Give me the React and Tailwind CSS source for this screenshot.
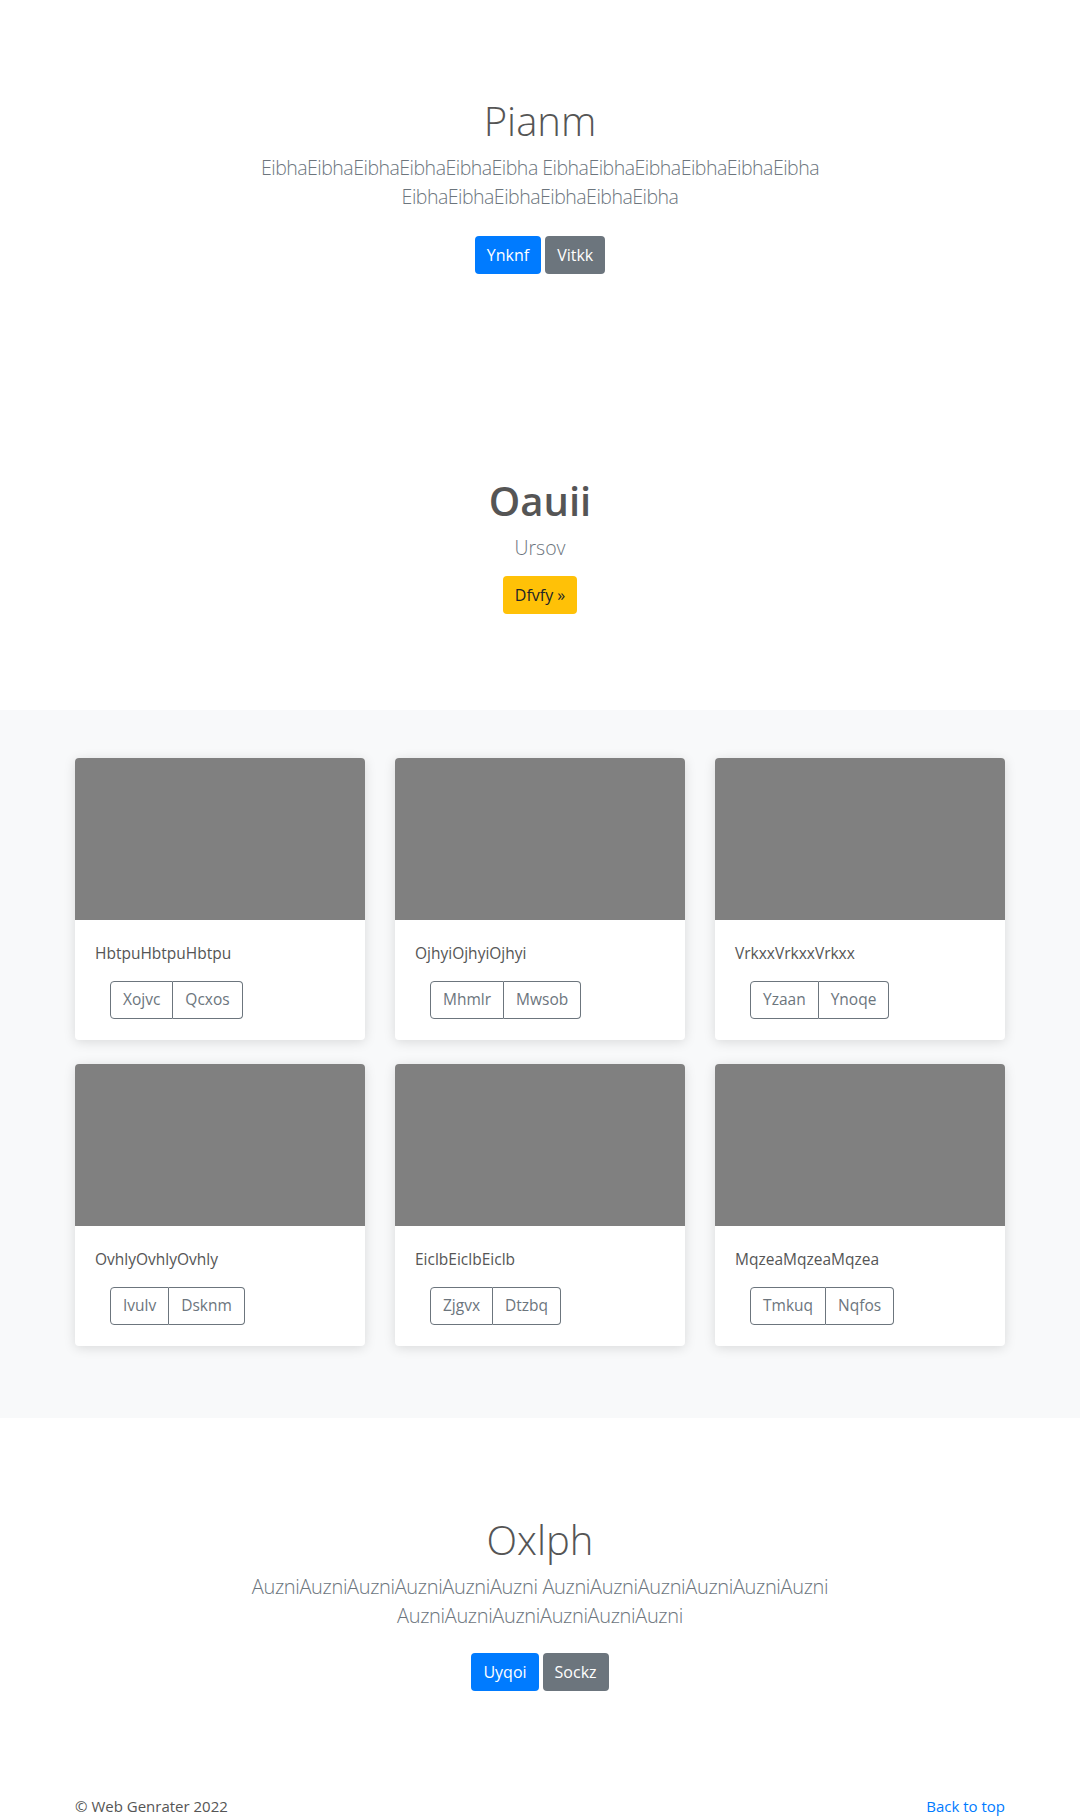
import React from "react";

const cards = [
  { t: "HbtpuHbtpuHbtpu", a: "Xojvc", b: "Qcxos" },
  { t: "OjhyiOjhyiOjhyi", a: "Mhmlr", b: "Mwsob" },
  { t: "VrkxxVrkxxVrkxx", a: "Yzaan", b: "Ynoqe" },
  { t: "OvhlyOvhlyOvhly", a: "Ivulv", b: "Dsknm" },
  { t: "EiclbEiclbEiclb", a: "Zjgvx", b: "Dtzbq" },
  { t: "MqzeaMqzeaMqzea", a: "Tmkuq", b: "Nqfos" },
];

function Card({ t, a, b }) {
  return (
    <div className="bg-white rounded-[4px] overflow-hidden shadow-[0_2px_12px_rgba(0,0,0,0.13)]">
      <div className="h-[162px] bg-[#808080]"></div>
      <div className="px-5 pt-[21px] pb-[21px]">
        <p className="text-[15.5px] leading-6 text-[#555] mb-[16px]">{t}</p>
        <div className="flex ml-[15px]">
          <button className="h-[38px] px-3 text-[15.5px] text-[#6c757d] border border-[#6c757d] rounded-l-[4px]">{a}</button>
          <button className="h-[38px] px-3 text-[15.5px] text-[#6c757d] border border-[#6c757d] border-l-0 rounded-r-[4px]">{b}</button>
        </div>
      </div>
    </div>
  );
}

export default function App() {
  return (
    <div className="bg-white text-[#555] font-['Open_Sans','Noto_Sans',Arial,sans-serif]">
      <section className="text-center pt-[97px]">
        <h1 className="text-[40px] leading-[48px] font-light text-[#555] mb-2">Pianm</h1>
        <p className="text-[19.5px] leading-[29px] tracking-[-0.5px] font-light text-[#6c757d] max-w-[640px] mx-auto">
          EibhaEibhaEibhaEibhaEibhaEibha EibhaEibhaEibhaEibhaEibhaEibha EibhaEibhaEibhaEibhaEibhaEibha
        </p>
        <div className="flex justify-center gap-1 mt-[25px]">
          <button className="h-[38px] px-3 rounded-[4px] bg-[#007bff] text-white text-[16px]">Ynknf</button>
          <button className="h-[38px] px-3 rounded-[4px] bg-[#6c757d] text-white text-[16px]">Vitkk</button>
        </div>
      </section>

      <section className="text-center pt-[203px] pb-[96px]">
        <h1 className="text-[40px] leading-[48px] font-semibold text-[#555] mb-2">Oauii</h1>
        <p className="text-[19.5px] leading-[30px] font-light text-[#6c757d]">Ursov</p>
        <div className="flex justify-center mt-[13px]">
          <button className="h-[38px] px-3 rounded-[4px] bg-[#ffc107] text-[#212529] text-[16px]">Dfvfy »</button>
        </div>
      </section>

      <section className="bg-[#f8f9fa] py-12">
        <div className="w-[930px] mx-auto grid grid-cols-3 gap-x-[30px] gap-y-6 pb-6">
          {cards.map((c) => (
            <Card key={c.t} {...c} />
          ))}
        </div>
      </section>

      <section className="text-center pt-[98px]">
        <h1 className="text-[40px] leading-[48px] font-light text-[#555] mb-2">Oxlph</h1>
        <p className="text-[20px] leading-[29px] tracking-[-0.35px] font-light text-[#6c757d] max-w-[680px] mx-auto">
          AuzniAuzniAuzniAuzniAuzniAuzni AuzniAuzniAuzniAuzniAuzniAuzni AuzniAuzniAuzniAuzniAuzniAuzni
        </p>
        <div className="flex justify-center gap-1 mt-[23px]">
          <button className="h-[38px] px-3 rounded-[4px] bg-[#007bff] text-white text-[16px]">Uyqoi</button>
          <button className="h-[38px] px-3 rounded-[4px] bg-[#6c757d] text-white text-[16px]">Sockz</button>
        </div>
      </section>

      <footer className="pt-[103px] pb-12">
        <div className="w-[930px] mx-auto flex justify-between text-[15px] leading-6">
          <p className="text-[#555]">© Web Genrater 2022</p>
          <a href="#" className="text-[#007bff]">Back to top</a>
        </div>
      </footer>
    </div>
  );
}
